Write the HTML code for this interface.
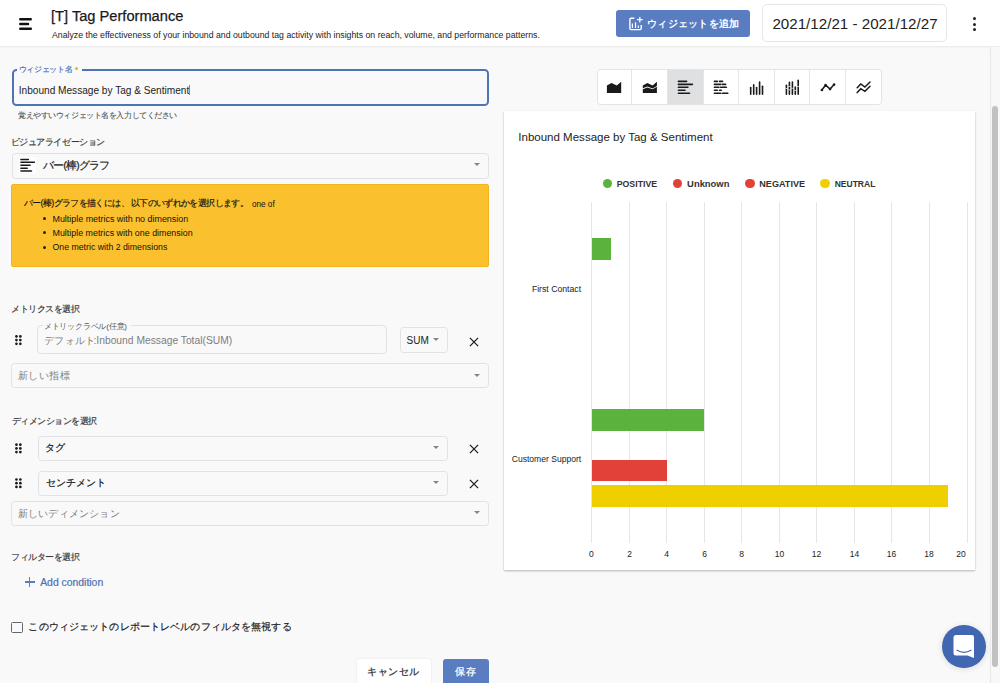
<!DOCTYPE html>
<html><head><meta charset="utf-8">
<style>
*{box-sizing:border-box;margin:0;padding:0}
html,body{width:1000px;height:683px;overflow:hidden}
body{position:relative;background:#f9f9f9;font-family:"Liberation Sans",sans-serif;color:#222}
.a{position:absolute}
.t{position:absolute;white-space:nowrap;line-height:1}
#hdr{left:0;top:0;width:1000px;height:47px;background:#fff;border-bottom:1.5px solid #ededed;box-shadow:0 1px 2px rgba(0,0,0,.03)}
.btn-blue{background:#5a7cc0;border-radius:3px}
.box{border:1px solid #e2e2e2;border-radius:3.5px}
.caret{position:absolute;width:0;height:0;border-left:3.3px solid transparent;border-right:3.3px solid transparent;border-top:3.4px solid #858585}
.lbl{font-size:9px;color:#333;font-weight:500}
#scroll{left:989.5px;top:47px;width:10.5px;height:636px;background:#f8f8f8;border-left:1px solid #e7e7e7}
#thumb{left:992.2px;top:106px;width:5.8px;height:561px;background:#c1c1c1;border-radius:3px}
</style></head>
<body>
<div id="hdr" class="a"></div>
<svg class="a" style="left:15px;top:14px" width="22" height="20" viewBox="15 14 22 20"><path d="M20.3 19.3H30.7M20.3 24H28M20.3 28.8H30.8" stroke="#111" stroke-width="2.5" stroke-linecap="round"/></svg>
<div id="t1" class="t" style="-webkit-text-stroke:0.25px #1a1a1a;left:51px;top:9.1px;font-size:14.65px;color:#1a1a1a">[T] Tag Performance</div>
<div id="t2" class="t" style="left:52px;top:31.2px;font-size:8.74px;color:#222">Analyze the effectiveness of your inbound and outbound tag activity with insights on reach, volume, and performance patterns.</div>

<div class="a btn-blue" style="left:616px;top:10px;width:134px;height:27px"></div>
<div id="t3" class="t" style="left:647px;top:18.8px;font-size:10px;letter-spacing:0.25px;font-weight:bold;color:#fff">ウィジェットを追加</div>

<div class="a box" style="left:761.9px;top:3.7px;width:185.5px;height:38.5px;background:#fff;border-radius:5px;border-color:#e6e6e6"></div>
<div id="t4" class="t" style="left:772.4px;top:15.5px;font-size:15.16px;color:#222">2021/12/21 - 2021/12/27</div>

<div class="a" style="left:972.5px;top:17px;width:3px;height:3px;border-radius:50%;background:#222"></div>
<div class="a" style="left:972.5px;top:22.5px;width:3px;height:3px;border-radius:50%;background:#222"></div>
<div class="a" style="left:972.5px;top:28.4px;width:3px;height:3px;border-radius:50%;background:#222"></div>


<!-- widget name -->
<div class="a" style="left:11.5px;top:69px;width:477px;height:37px;border:2px solid #5072b8;border-radius:4.5px"></div>
<div class="a" style="left:17.3px;top:65px;width:64.7px;height:8px;background:#f9f9f9"></div>
<div id="t5" class="t" style="-webkit-text-stroke:0.15px #4d6fb6;left:18.5px;top:65.9px;font-size:8px;letter-spacing:-0.267px;color:#4d6fb6">ウィジェット名</div>
<div class="a" style="left:74.5px;top:66.5px;width:3px;height:3px;border-radius:50%;background:#f5b400"></div>
<div id="t6" class="t" style="left:18.8px;top:85.5px;font-size:10.1px;color:#222">Inbound Message by Tag &amp; Sentiment</div>
<div class="a" style="left:189.2px;top:84.6px;width:1px;height:10.6px;background:#6c8ac4"></div>
<div id="t7" class="t" style="-webkit-text-stroke:0.1px #555;left:18.0px;top:112.0px;font-size:8px;letter-spacing:-0.43px;color:#555">覚えやすいウィジェット名を入力してください</div>

<div id="t8" class="t lbl" style="left:10.55px;top:137.5px;font-size:9px;letter-spacing:-0.415px;-webkit-text-stroke:0.15px #333">ビジュアライゼーション</div>
<div class="a box" style="left:11.5px;top:152.5px;width:477.3px;height:26px"></div>
<svg class="a" style="left:18px;top:156px" width="20" height="18" viewBox="18 156 20 18"><rect x="19" y="157" width="16.5" height="16" fill="#fff"/><path d="M20.9 159.4H28.4M20.9 162.26H34.4M20.9 165.24H30.1M20.9 168.17H27.2M20.9 170.95H31.5" stroke="#1a1a1a" stroke-width="1.5" stroke-linecap="round"/></svg>
<div id="t9" class="t" style="-webkit-text-stroke:0.2px #222;left:43px;top:160.1px;font-size:11px;letter-spacing:-0.914px;color:#222">バー(棒)グラフ</div>
<div class="caret" style="left:474px;top:162.5px"></div>

<div class="a" style="left:11px;top:184px;width:477.5px;height:82.5px;background:#fbc02d;border:1px solid #f2b51e;border-radius:2px"></div>
<div id="t10" class="t" style="-webkit-text-stroke:0.15px #111;left:23.7px;top:199.25px;font-size:9px;letter-spacing:-0.622px;color:#111">バー(棒)グラフを描くには、 以下のいずれかを選択します。</div>
<div id="t10b" class="t" style="left:252px;top:201.05px;font-size:8.16px;color:#111">one of</div>
<div class="a" style="left:42.5px;top:216.5px;width:3px;height:3px;border-radius:50%;background:#222"></div>
<div class="a" style="left:42.5px;top:231.2px;width:3px;height:3px;border-radius:50%;background:#222"></div>
<div class="a" style="left:42.5px;top:245.8px;width:3px;height:3px;border-radius:50%;background:#222"></div>
<div id="t11" class="t" style="left:52.5px;top:214.95px;font-size:8.91px;color:#111">Multiple metrics with no dimension</div>
<div id="t12" class="t" style="left:52.5px;top:229.2px;font-size:8.89px;color:#111">Multiple metrics with one dimension</div>
<div id="t13" class="t" style="left:52.5px;top:243.15px;font-size:8.75px;color:#111">One metric with 2 dimensions</div>

<div id="t14" class="t lbl" style="left:11.0px;top:305.25px;font-size:9px;letter-spacing:-0.443px;-webkit-text-stroke:0.15px #333">メトリクスを選択</div>
<svg class="a" style="left:0;top:0;overflow:visible" width="1" height="1" viewBox="0 0 1 1"><g fill="#1a1a1a"><circle cx="16.45" cy="336.40" r="1.35"/><circle cx="20.35" cy="336.40" r="1.35"/><circle cx="16.45" cy="340.10" r="1.35"/><circle cx="20.35" cy="340.10" r="1.35"/><circle cx="16.45" cy="343.80" r="1.35"/><circle cx="20.35" cy="343.80" r="1.35"/></g></svg>
<div class="a box" style="left:37.4px;top:325.4px;width:350.1px;height:28.5px"></div>
<div class="a" style="left:43px;top:322px;width:88px;height:8px;background:#f9f9f9"></div>
<div id="t15" class="t" style="left:43.8px;top:323.3px;font-size:8px;letter-spacing:-0.192px;color:#555">メトリックラベル(任意)</div>
<div id="t16" class="t" style="left:44.1px;top:335.85px;font-size:10px;letter-spacing:0.325px;color:#7d7d7d">デフォルト</div>
<div id="t16b" class="t" style="left:93.5px;top:336.3px;font-size:10.29px;color:#7d7d7d">:Inbound Message Total(SUM)</div>
<div class="a box" style="left:399.6px;top:326.7px;width:48.2px;height:26px"></div>
<div id="t17" class="t" style="left:406.5px;top:336.3px;font-size:10px;color:#222">SUM</div>
<div class="caret" style="left:433px;top:338px"></div>
<svg class="a" style="left:468px;top:335.5px" width="12" height="12" viewBox="0 0 12 12"><path d="M1.9 1.9L10.1 10.1M10.1 1.9L1.9 10.1" stroke="#1a1a1a" stroke-width="1.25"/></svg>
<div class="a box" style="left:11.3px;top:363.3px;width:477.3px;height:25.2px"></div>
<div id="t18" class="t" style="left:17.7px;top:371.1px;font-size:10px;letter-spacing:0.5px;color:#7d7d7d">新しい指標</div>
<div class="caret" style="left:474px;top:373.5px"></div>

<div id="t19" class="t lbl" style="left:11.8px;top:416.7px;font-size:9px;letter-spacing:-0.478px;-webkit-text-stroke:0.15px #333">ディメンションを選択</div>
<svg class="a" style="left:0;top:0;overflow:visible" width="1" height="1" viewBox="0 0 1 1"><g fill="#1a1a1a"><circle cx="16.45" cy="444.70" r="1.35"/><circle cx="20.35" cy="444.70" r="1.35"/><circle cx="16.45" cy="448.40" r="1.35"/><circle cx="20.35" cy="448.40" r="1.35"/><circle cx="16.45" cy="452.10" r="1.35"/><circle cx="20.35" cy="452.10" r="1.35"/></g></svg>
<div class="a box" style="left:37.5px;top:435.5px;width:410px;height:25px"></div>
<div id="t20" class="t" style="left:44.7px;top:442.85px;font-size:10px;letter-spacing:0.5px;-webkit-text-stroke:0.2px #222;color:#222">タグ</div>
<div class="caret" style="left:433px;top:446px"></div>
<svg class="a" style="left:468px;top:443px" width="12" height="12" viewBox="0 0 12 12"><path d="M1.9 1.9L10.1 10.1M10.1 1.9L1.9 10.1" stroke="#1a1a1a" stroke-width="1.25"/></svg>
<svg class="a" style="left:0;top:0;overflow:visible" width="1" height="1" viewBox="0 0 1 1"><g fill="#1a1a1a"><circle cx="16.45" cy="479.50" r="1.35"/><circle cx="20.35" cy="479.50" r="1.35"/><circle cx="16.45" cy="483.20" r="1.35"/><circle cx="20.35" cy="483.20" r="1.35"/><circle cx="16.45" cy="486.90" r="1.35"/><circle cx="20.35" cy="486.90" r="1.35"/></g></svg>
<div class="a box" style="left:37.5px;top:470.5px;width:410px;height:25px"></div>
<div id="t21" class="t" style="left:45.7px;top:478.05px;font-size:10px;letter-spacing:0.1px;-webkit-text-stroke:0.2px #222;color:#222">センチメント</div>
<div class="caret" style="left:433px;top:481px"></div>
<svg class="a" style="left:468px;top:478px" width="12" height="12" viewBox="0 0 12 12"><path d="M1.9 1.9L10.1 10.1M10.1 1.9L1.9 10.1" stroke="#1a1a1a" stroke-width="1.25"/></svg>
<div class="a box" style="left:11.3px;top:500.6px;width:477.3px;height:25.7px"></div>
<div id="t22" class="t" style="left:17.7px;top:508.6px;font-size:10px;letter-spacing:0.222px;color:#7d7d7d">新しいディメンション</div>
<div class="caret" style="left:474px;top:511px"></div>

<div id="t23" class="t lbl" style="left:11px;top:553.4px;font-size:9px;letter-spacing:-0.5px;-webkit-text-stroke:0.15px #333">フィルターを選択</div>
<div class="a" style="left:24.8px;top:581.35px;width:10.1px;height:1.3px;background:#5a7cc0"></div>
<div class="a" style="left:29.2px;top:577px;width:1.3px;height:10px;background:#5a7cc0"></div>
<div id="t24" class="t" style="left:40.2px;top:578.2px;font-size:10.4px;color:#4d6fb6;-webkit-text-stroke:0.2px #4d6fb6">Add condition</div>
<div class="a" style="left:11.2px;top:621.8px;width:11.5px;height:11px;border:1.6px solid #666;border-radius:1.5px"></div>
<div id="t25" class="t" style="left:28.4px;top:621.9px;font-size:10px;letter-spacing:0.128px;-webkit-text-stroke:0.2px #222;color:#222">このウィジェットのレポートレベルのフィルタを無視する</div>

<div class="a" style="left:357px;top:659px;width:73.5px;height:30px;background:#fff;border-radius:3px;box-shadow:0 0 2px rgba(0,0,0,.12)"></div>
<div id="t26" class="t" style="left:367.4px;top:666.8px;font-size:10px;letter-spacing:0.425px;-webkit-text-stroke:0.25px #333;color:#333">キャンセル</div>
<div class="a btn-blue" style="left:442.5px;top:659px;width:46.3px;height:30px"></div>
<div id="t27" class="t" style="left:454.7px;top:666.85px;font-size:10px;letter-spacing:0.9px;-webkit-text-stroke:0.25px #fff;color:#fff">保存</div>

<div class="a" style="left:596.5px;top:69px;width:285px;height:35.5px;background:#fff;border:1px solid #e3e3e3;border-radius:3.5px"></div>
<div class="a" style="left:667.5px;top:70px;width:35.3px;height:33.5px;background:#dfe0e2"></div>
<div class="a" style="left:631.4px;top:70px;width:1px;height:33.5px;background:#e6e6e6"></div>
<div class="a" style="left:667px;top:70px;width:1px;height:33.5px;background:#e6e6e6"></div>
<div class="a" style="left:702.8px;top:70px;width:1px;height:33.5px;background:#e6e6e6"></div>
<div class="a" style="left:738.3px;top:70px;width:1px;height:33.5px;background:#e6e6e6"></div>
<div class="a" style="left:774px;top:70px;width:1px;height:33.5px;background:#e6e6e6"></div>
<div class="a" style="left:809.3px;top:70px;width:1px;height:33.5px;background:#e6e6e6"></div>
<div class="a" style="left:845.3px;top:70px;width:1px;height:33.5px;background:#e6e6e6"></div>
<div class="a" style="left:503.5px;top:110.5px;width:471.3px;height:459.3px;background:#fff;box-shadow:0 1px 2px rgba(0,0,0,.28)"></div>
<div id="c1" class="t" style="left:518.3px;top:132.25px;font-size:11.52px;color:#222">Inbound Message by Tag &amp; Sentiment</div>
<div class="a" style="left:602.6px;top:178.7px;width:9.6px;height:9.6px;border-radius:50%;background:#5bb33d"></div>
<div class="a" style="left:672.9000000000001px;top:178.7px;width:9.6px;height:9.6px;border-radius:50%;background:#e2413a"></div>
<div class="a" style="left:745.0px;top:178.7px;width:9.6px;height:9.6px;border-radius:50%;background:#e2413a"></div>
<div class="a" style="left:820.2px;top:178.7px;width:9.6px;height:9.6px;border-radius:50%;background:#f1cf00"></div>
<div id="lg0" class="t" style="left:616.7px;top:179.75px;font-size:8.77px;font-weight:bold;color:#333">POSITIVE</div>
<div id="lg1" class="t" style="left:687.1px;top:179.25px;font-size:9.41px;font-weight:bold;color:#333">Unknown</div>
<div id="lg2" class="t" style="left:759.3px;top:179.75px;font-size:9.08px;font-weight:bold;color:#333">NEGATIVE</div>
<div id="lg3" class="t" style="left:834.7px;top:179.75px;font-size:8.52px;font-weight:bold;color:#333">NEUTRAL</div>
<div class="a" style="left:591px;top:202px;width:1px;height:340.5px;background:#e6e6e6"></div>
<div class="a" style="left:629px;top:202px;width:1px;height:340.5px;background:#e6e6e6"></div>
<div class="a" style="left:666px;top:202px;width:1px;height:340.5px;background:#e6e6e6"></div>
<div class="a" style="left:704px;top:202px;width:1px;height:340.5px;background:#e6e6e6"></div>
<div class="a" style="left:741px;top:202px;width:1px;height:340.5px;background:#e6e6e6"></div>
<div class="a" style="left:779px;top:202px;width:1px;height:340.5px;background:#e6e6e6"></div>
<div class="a" style="left:816px;top:202px;width:1px;height:340.5px;background:#e6e6e6"></div>
<div class="a" style="left:854px;top:202px;width:1px;height:340.5px;background:#e6e6e6"></div>
<div class="a" style="left:891px;top:202px;width:1px;height:340.5px;background:#e6e6e6"></div>
<div class="a" style="left:929px;top:202px;width:1px;height:340.5px;background:#e6e6e6"></div>
<div class="a" style="left:966.5px;top:202px;width:1px;height:340.5px;background:#e6e6e6"></div>
<div class="a" style="left:592px;top:238px;width:19px;height:21.6px;background:#5bb33d"></div>
<div class="a" style="left:592px;top:408.7px;width:112px;height:21.9px;background:#5bb33d"></div>
<div class="a" style="left:592px;top:459.7px;width:75px;height:21.6px;background:#e2413a"></div>
<div class="a" style="left:592px;top:485px;width:356px;height:22px;background:#f0cf00"></div>
<div id="yl1" class="t" style="left:531.9px;top:284.6px;font-size:8.68px;color:#222">First Contact</div>
<div id="yl2" class="t" style="left:511.8px;top:454.85px;font-size:8.56px;color:#222">Customer Support</div>
<div id="xl0" class="t" style="left:591.4px;top:549.8px;font-size:8.5px;color:#222;transform:translateX(-50%)">0</div>
<div id="xl1" class="t" style="left:629.5px;top:549.8px;font-size:8.5px;color:#222;transform:translateX(-50%)">2</div>
<div id="xl2" class="t" style="left:666.6px;top:549.8px;font-size:8.5px;color:#222;transform:translateX(-50%)">4</div>
<div id="xl3" class="t" style="left:704.5px;top:549.8px;font-size:8.5px;color:#222;transform:translateX(-50%)">6</div>
<div id="xl4" class="t" style="left:741.5px;top:549.8px;font-size:8.5px;color:#222;transform:translateX(-50%)">8</div>
<div id="xl5" class="t" style="left:779.5px;top:549.8px;font-size:8.5px;color:#222;transform:translateX(-50%)">10</div>
<div id="xl6" class="t" style="left:816.5px;top:549.8px;font-size:8.5px;color:#222;transform:translateX(-50%)">12</div>
<div id="xl7" class="t" style="left:854.5px;top:549.8px;font-size:8.5px;color:#222;transform:translateX(-50%)">14</div>
<div id="xl8" class="t" style="left:891.5px;top:549.8px;font-size:8.5px;color:#222;transform:translateX(-50%)">16</div>
<div id="xl9" class="t" style="left:929.1px;top:549.8px;font-size:8.5px;color:#222;transform:translateX(-50%)">18</div>
<div id="xl10" class="t" style="left:960.9px;top:549.8px;font-size:8.5px;color:#222;transform:translateX(-50%)">20</div>
<div class="a" style="left:942px;top:624.8px;width:43.6px;height:43.6px;border-radius:50%;background:#4267b2;box-shadow:0 1px 6px rgba(0,0,0,.12)"></div>
<svg class="a" style="left:953px;top:634px" width="22" height="25" viewBox="0 0 22 25"><path d="M3 1H19A2 2 0 0 1 21 3V24L14.5 21.5H3A2.5 2.5 0 0 1 0.5 19V3.5A2.5 2.5 0 0 1 3 1Z" fill="#fff"/><path d="M4 16.3Q11 20.3 18 16.3" stroke="#4267b2" stroke-width="1.3" fill="none" stroke-linecap="round"/></svg>
<svg class="a" style="left:622px;top:12px" width="26" height="23" viewBox="622 12 26 23"><path d="M634.3 18.3H631A1.1 1.1 0 0 0 629.9 19.4V28.5A1.1 1.1 0 0 0 631 29.6H640.1A1.1 1.1 0 0 0 641.2 28.5V25" fill="none" stroke="#fff" stroke-width="1.4"/><path d="M632.4 23.6V27.9M635.5 22.3V27.9M638.3 25.5V27.9" stroke="#fff" stroke-width="1.2"/><path d="M637 19.7H642.7M639.8 17V22.6" stroke="#fff" stroke-width="1.3"/></svg>
<svg class="a" style="left:596px;top:68px" width="288" height="38" viewBox="596 68 288 38"><path d="M606.9 85.5L611.5 83L616.8 85.5L621.2 81.8V92.9H606.9Z" fill="#1a1a1a"/><path d="M642.8 85.5L647.4 83L652.6 85.4L656.9 81.8V85.9L652.6 88.4L647.4 86.6L642.8 88.3Z" fill="#1a1a1a"/><path d="M642.8 89.3L647.4 87.6L652.6 89.3L656.9 86.7V92.9H642.8Z" fill="#1a1a1a"/><path d="M678.4 81.4H686.6" stroke="#1a1a1a" stroke-width="1.6" stroke-linecap="round"/><path d="M678.4 84.4H692.4" stroke="#1a1a1a" stroke-width="1.6" stroke-linecap="round"/><path d="M678.4 87.3H687.9" stroke="#1a1a1a" stroke-width="1.6" stroke-linecap="round"/><path d="M678.4 90.3H685.0" stroke="#1a1a1a" stroke-width="1.6" stroke-linecap="round"/><path d="M678.4 93.2H689.5" stroke="#1a1a1a" stroke-width="1.6" stroke-linecap="round"/><path d="M714.4 81.4H717.3" stroke="#1a1a1a" stroke-width="1.6" stroke-linecap="round"/><path d="M719.5 81.4H722.6" stroke="#1a1a1a" stroke-width="1.6" stroke-linecap="round"/><path d="M714.4 84.4H720.8" stroke="#1a1a1a" stroke-width="1.6" stroke-linecap="round"/><path d="M722.5 84.4H725.6" stroke="#1a1a1a" stroke-width="1.6" stroke-linecap="round"/><path d="M714.4 87.3H718.9" stroke="#1a1a1a" stroke-width="1.6" stroke-linecap="round"/><path d="M720.5 87.3H726.4" stroke="#1a1a1a" stroke-width="1.6" stroke-linecap="round"/><path d="M714.4 90.3H717.3" stroke="#1a1a1a" stroke-width="1.6" stroke-linecap="round"/><path d="M719.5 90.3H721.3" stroke="#1a1a1a" stroke-width="1.6" stroke-linecap="round"/><path d="M714.4 93.2H720.8" stroke="#1a1a1a" stroke-width="1.6" stroke-linecap="round"/><path d="M722.5 93.2H727.8" stroke="#1a1a1a" stroke-width="1.6" stroke-linecap="round"/><path d="M750.7 87.5V94.3" stroke="#1a1a1a" stroke-width="1.6" stroke-linecap="round"/><path d="M753.7 84.7V94.3" stroke="#1a1a1a" stroke-width="1.6" stroke-linecap="round"/><path d="M756.6 87.5V94.3" stroke="#1a1a1a" stroke-width="1.6" stroke-linecap="round"/><path d="M759.6 82.0V94.3" stroke="#1a1a1a" stroke-width="1.6" stroke-linecap="round"/><path d="M762.5 86.30000000000001V94.3" stroke="#1a1a1a" stroke-width="1.6" stroke-linecap="round"/><path d="M786.4 85.30000000000001V94.3" stroke="#1a1a1a" stroke-width="1.6" stroke-linecap="round"/><path d="M786.4 88.05000000000001V88.75" stroke="#fff" stroke-width="2"/><path d="M789.4 82.4V94.3" stroke="#1a1a1a" stroke-width="1.6" stroke-linecap="round"/><path d="M789.4 86.15V86.85" stroke="#fff" stroke-width="2"/><path d="M789.4 89.55000000000001V90.25" stroke="#fff" stroke-width="2"/><path d="M792.4 82.0V94.3" stroke="#1a1a1a" stroke-width="1.6" stroke-linecap="round"/><path d="M792.4 87.85000000000001V88.55" stroke="#fff" stroke-width="2"/><path d="M795.3 87.10000000000001V94.3" stroke="#1a1a1a" stroke-width="1.6" stroke-linecap="round"/><path d="M795.3 89.95V90.64999999999999" stroke="#fff" stroke-width="2"/><path d="M798.2 80.30000000000001V94.3" stroke="#1a1a1a" stroke-width="1.6" stroke-linecap="round"/><path d="M798.2 86.15V86.85" stroke="#fff" stroke-width="2"/><path d="M821.9 90L825.6 85L830.1 89.1L834.1 84.6" fill="none" stroke="#1a1a1a" stroke-width="1.5" stroke-linejoin="round"/><circle cx="821.9" cy="90" r="1.3" fill="#1a1a1a"/><circle cx="825.6" cy="85" r="1.3" fill="#1a1a1a"/><circle cx="830.1" cy="89.1" r="1.3" fill="#1a1a1a"/><circle cx="834.1" cy="84.6" r="1.3" fill="#1a1a1a"/><path d="M857.2 87.8L860.8 83.9L864.9 87.1L870 82M857.2 92.6L860.8 88.7L864.9 91.3L870 86.2" fill="none" stroke="#1a1a1a" stroke-width="1.5" stroke-linecap="round"/></svg>
<div id="scroll" class="a"></div>
<div id="thumb" class="a"></div>
</body></html>
